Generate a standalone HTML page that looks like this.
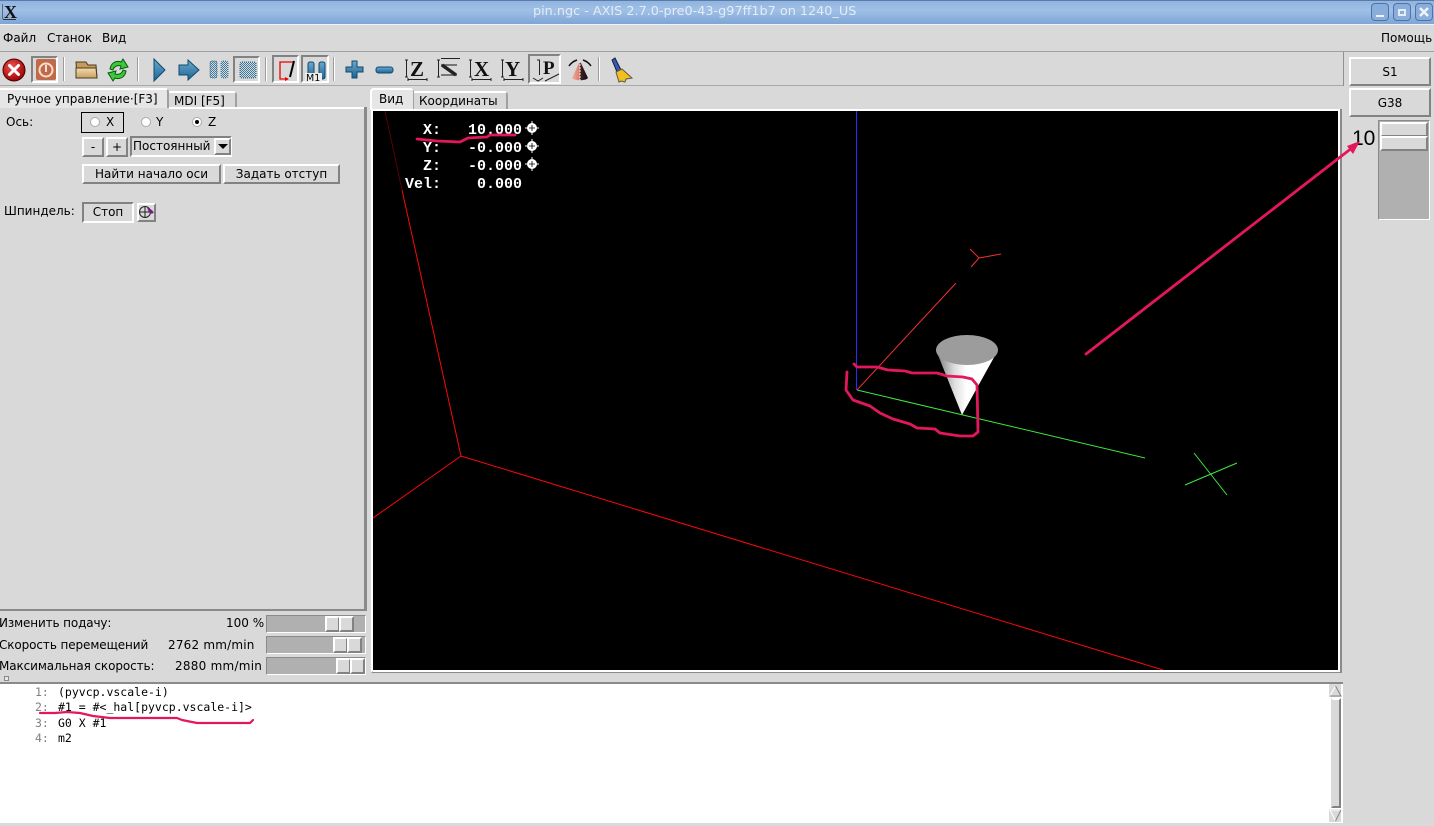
<!DOCTYPE html>
<html><head><meta charset="utf-8"><style>
html,body{margin:0;padding:0;width:1434px;height:826px;overflow:hidden;background:#d9d9d9}
body{position:relative;font-family:"DejaVu Sans","Liberation Sans",sans-serif;font-size:12px;color:#000}
.a{position:absolute;box-sizing:border-box}
.t{position:absolute;white-space:nowrap;line-height:14px}
.b{position:absolute;box-sizing:border-box;background:#d9d9d9;border:2px solid;border-color:#fff #828282 #828282 #fff;text-align:center;white-space:nowrap}
.s{position:absolute;box-sizing:border-box;background:#d9d9d9;border:2px solid;border-color:#828282 #fff #fff #828282}
.m{font-family:"DejaVu Sans Mono","Liberation Mono",monospace;font-size:11.5px;line-height:15.3px;position:absolute;white-space:pre}
.d{font-family:"Liberation Mono",monospace;font-weight:bold;font-size:15px;color:#fff;position:absolute;white-space:pre;line-height:18px}
svg{position:absolute;left:0;top:0}
</style></head><body>
<!-- title bar -->
<div class="a" style="left:0;top:0;width:1434px;height:25px;background:linear-gradient(#8fb4e0,#a0c0e6 40%,#7ea5d6);border-top:1px solid #5b7aa5;border-bottom:1px solid #f0f4fa"></div>
<div class="t" style="left:533px;top:5px;font-size:12.8px;color:#e4ecf6">pin.ngc - AXIS 2.7.0-pre0-43-g97ff1b7 on 1240_US</div>
<div class="t" style="left:4px;top:3px;font-family:'Liberation Serif',serif;font-weight:bold;font-size:18px;line-height:18px;color:#111">X</div>
<div class="a" style="left:2px;top:4px;width:1px;height:15px;background:#666"></div>
<div class="a" style="left:3px;top:19px;width:13px;height:1px;background:#333"></div>
<div class="a" style="left:1371px;top:3px;width:18px;height:18px;border:1px solid #4f73a8;border-radius:4px;background:#8aaedc"></div>
<div class="a" style="left:1393px;top:3px;width:18px;height:18px;border:1px solid #4f73a8;border-radius:4px;background:#8aaedc"></div>
<div class="a" style="left:1415px;top:3px;width:18px;height:18px;border:1px solid #4f73a8;border-radius:4px;background:#8aaedc"></div>
<div class="a" style="left:1376px;top:15px;width:8px;height:2px;background:#eef3fa"></div>
<div class="a" style="left:1398px;top:9px;width:8px;height:7px;border:2px solid #e4ecf6"></div>
<svg width="1434" height="30"><path d="M1420 8l8 8M1428 8l-8 8" stroke="#eef3fa" stroke-width="2.600"/></svg>
<!-- menu -->
<div class="t" style="left:3px;top:31px">Файл</div>
<div class="t" style="left:47px;top:31px">Станок</div>
<div class="t" style="left:102px;top:31px">Вид</div>
<div class="t" style="left:1381px;top:31px">Помощь</div>
<div class="a" style="left:0;top:51px;width:1434px;height:1px;background:#a0a0a0"></div>
<div class="a" style="left:0;top:85px;width:1344px;height:1px;background:#a8a8a8"></div>
<div class="a" style="left:1343px;top:52px;width:1px;height:34px;background:#909090"></div>
<!-- toolbar raised/sunken -->
<div class="s" style="left:31px;top:56px;width:27px;height:27px"></div>
<div class="s" style="left:233px;top:56px;width:27px;height:27px"></div>
<div class="s" style="left:272px;top:55px;width:27px;height:28px"></div>
<div class="s" style="left:301px;top:55px;width:28px;height:28px"></div>
<div class="s" style="left:528px;top:54px;width:33px;height:30px"></div>
<div class="a" style="left:63px;top:57px;width:2px;height:24px;background:linear-gradient(90deg,#9c9c9c 50%,#fff 50%)"></div>
<div class="a" style="left:137px;top:57px;width:2px;height:24px;background:linear-gradient(90deg,#9c9c9c 50%,#fff 50%)"></div>
<div class="a" style="left:265px;top:57px;width:2px;height:24px;background:linear-gradient(90deg,#9c9c9c 50%,#fff 50%)"></div>
<div class="a" style="left:333px;top:57px;width:2px;height:24px;background:linear-gradient(90deg,#9c9c9c 50%,#fff 50%)"></div>
<div class="a" style="left:598px;top:57px;width:2px;height:24px;background:linear-gradient(90deg,#9c9c9c 50%,#fff 50%)"></div>
<!-- left tabs -->
<div class="a" style="left:0;top:88px;width:169px;height:20px;background:#e6e6e6;border-top:2px solid #fff;border-right:2px solid #a0a0a0;border-top-right-radius:4px"></div>
<div class="t" style="left:7px;top:92px">Ручное управление·[F3]</div>
<div class="a" style="left:169px;top:91px;width:68px;height:17px;border-top:2px solid #fff;border-right:2px solid #a0a0a0;border-top-right-radius:4px"></div>
<div class="t" style="left:174px;top:94px">MDI [F5]</div>
<div class="a" style="left:169px;top:107px;width:197px;height:2px;background:#fff"></div>
<div class="a" style="left:364px;top:107px;width:3px;height:504px;background:#8a8a8a"></div>
<div class="a" style="left:0;top:609px;width:367px;height:2px;background:#8a8a8a"></div>
<!-- axis -->
<div class="t" style="left:6px;top:115px">Ось:</div>
<div class="a" style="left:81px;top:112px;width:43px;height:21px;border:1px solid #000"></div>
<svg width="260" height="135" style="z-index:1">
<circle cx="95" cy="122" r="4.500" fill="#fff" stroke="#aaa"/>
<circle cx="146" cy="122" r="4.500" fill="#fff" stroke="#aaa"/>
<circle cx="197" cy="122" r="4.500" fill="#fff" stroke="#aaa"/>
<circle cx="197" cy="122" r="2" fill="#000"/>
</svg>
<div class="t" style="left:106px;top:115px">X</div>
<div class="t" style="left:156px;top:115px">Y</div>
<div class="t" style="left:208px;top:115px">Z</div>
<div class="b" style="left:82px;top:137px;width:22px;height:20px;line-height:16px">-</div>
<div class="b" style="left:106px;top:137px;width:22px;height:20px;line-height:16px">+</div>
<div class="s" style="left:130px;top:136px;width:102px;height:21px"></div>
<div class="t" style="left:133px;top:139px">Постоянный</div>
<div class="b" style="left:214px;top:138px;width:17px;height:17px"></div>
<svg width="240" height="160" style="z-index:1"><path d="M218 144h10l-5 5z" fill="#000"/></svg>
<div class="b" style="left:82px;top:164px;width:139px;height:20px;line-height:16px">Найти начало оси</div>
<div class="b" style="left:223px;top:164px;width:117px;height:20px;line-height:16px">Задать отступ</div>
<div class="t" style="left:4px;top:204px">Шпиндель:</div>
<div class="s" style="left:82px;top:202px;width:52px;height:21px;text-align:center;line-height:17px">Стоп</div>
<div class="b" style="left:137px;top:203px;width:19px;height:19px"></div>
<svg width="160" height="225" style="z-index:1">
<circle cx="145" cy="212" r="5.500" fill="none" stroke="#222"/><path d="M145 206v12M139 212h12" stroke="#222"/>
<path d="M147 208l5 2 2 3-4 1z" fill="#7a1a8a"/>
</svg>
<!-- sliders -->
<div class="t" style="left:-1px;top:616px;letter-spacing:-.13px">Изменить подачу:</div>
<div class="t" style="left:226px;top:616px">100 %</div>
<div class="t" style="left:-1px;top:638px;letter-spacing:-.1px">Скорость перемещений</div>
<div class="t" style="left:168px;top:638px;letter-spacing:.2px">2762 mm/min</div>
<div class="t" style="left:-1px;top:659px;letter-spacing:-.1px">Максимальная скорость:</div>
<div class="t" style="left:175px;top:659px;letter-spacing:.25px">2880 mm/min</div>
<div class="a" style="left:266px;top:615px;width:100px;height:18px;background:#b0b0b0;border:1px solid;border-color:#8a8a8a #fff #fff #8a8a8a"></div>
<div class="a" style="left:266px;top:636px;width:100px;height:18px;background:#b0b0b0;border:1px solid;border-color:#8a8a8a #fff #fff #8a8a8a"></div>
<div class="a" style="left:266px;top:657px;width:100px;height:18px;background:#b0b0b0;border:1px solid;border-color:#8a8a8a #fff #fff #8a8a8a"></div>
<div class="b" style="left:325px;top:616px;width:15px;height:16px"></div><div class="b" style="left:339px;top:616px;width:15px;height:16px"></div>
<div class="b" style="left:333px;top:637px;width:15px;height:16px"></div><div class="b" style="left:347px;top:637px;width:15px;height:16px"></div>
<div class="b" style="left:336px;top:658px;width:15px;height:16px"></div><div class="b" style="left:350px;top:658px;width:15px;height:16px"></div>
<div class="a" style="left:4px;top:676px;width:5px;height:5px;background:#e8e8e8;border:1px solid #888"></div>
<!-- view tabs -->
<div class="a" style="left:370px;top:88px;width:44px;height:22px;background:#e6e6e6;border-top:2px solid #fff;border-left:2px solid #fff;border-right:1px solid #a0a0a0;border-top-left-radius:4px;border-top-right-radius:4px"></div>
<div class="t" style="left:379px;top:92px">Вид</div>
<div class="a" style="left:414px;top:91px;width:94px;height:18px;border-top:2px solid #fff;border-right:2px solid #a0a0a0;border-top-right-radius:4px"></div>
<div class="t" style="left:419px;top:94px">Координаты</div>
<!-- canvas -->
<div class="a" style="left:371px;top:109px;width:971px;height:564px;background:#000;border:2px solid;border-color:#fff #8a8a8a #8a8a8a #fff"></div>
<div class="a" style="left:373px;top:670px;width:967px;height:2px;background:#fff"></div>
<div class="a" style="left:1340px;top:109px;width:2px;height:564px;background:#8a8a8a"></div>
<div class="a" style="left:1338px;top:111px;width:2px;height:560px;background:#fff"></div>
<div class="a" style="left:856px;top:111px;width:1px;height:279px;background:#2a2aff;z-index:2"></div>
<svg width="1434" height="826" style="z-index:2">
<defs>
<linearGradient id="c" x1="0" x2="1" y1="0" y2="0"><stop offset="0" stop-color="#777"/><stop offset=".3" stop-color="#ddd"/><stop offset=".5" stop-color="#fff"/><stop offset="1" stop-color="#fff"/></linearGradient>
<clipPath id="cv"><rect x="373" y="111" width="965" height="559"/></clipPath>
<radialGradient id="rd" cx=".4" cy=".35" r=".7"><stop offset="0" stop-color="#f05050"/><stop offset="1" stop-color="#900"/></radialGradient>
<linearGradient id="bl" x1="0" x2="0" y1="0" y2="1"><stop offset="0" stop-color="#6fa8cc"/><stop offset="1" stop-color="#1a6595"/></linearGradient>
<linearGradient id="rc" x1="0" x2="1" y1="0" y2="0"><stop offset="0" stop-color="#f0b0a0"/><stop offset=".5" stop-color="#d87868"/><stop offset=".52" stop-color="#402020"/><stop offset="1" stop-color="#111"/></linearGradient>
<pattern id="dt" width="2" height="2" patternUnits="userSpaceOnUse"><rect width="2" height="2" fill="#d9d9d9"/><rect width="1" height="1" fill="#3f7a9c"/><rect x="1" y="1" width="1" height="1" fill="#3f7a9c"/></pattern>
<linearGradient id="fo" x1="0" x2="0" y1="0" y2="1"><stop offset="0" stop-color="#f3dcaa"/><stop offset="1" stop-color="#c8a066"/></linearGradient>
</defs>
<!-- toolbar icons -->
<circle cx="14" cy="70" r="11" fill="url(#rd)" stroke="#400"/>
<path d="M9.500 65.500l9 9M18.500 65.500l-9 9" stroke="#fff" stroke-width="3" stroke-linecap="round"/>
<rect x="36" y="59" width="20" height="21" rx="2" fill="#c26a48"/>
<circle cx="46" cy="70" r="6.500" fill="none" stroke="#f6dfd0" stroke-width="2"/><path d="M46 65v7" stroke="#f6dfd0" stroke-width="2"/>
<path d="M76 62h10l2 3h8l1 13H77z" fill="#c49a5e" stroke="#4a3c20"/>
<path d="M76 78l0-10h20l1 10z" fill="url(#fo)" stroke="#4a3c20"/>
<path d="M110 69c1-6 6-9 11-7l2-3 5 8-8 2 1-3c-3-1-7 0-8 4z" fill="#3cc83c" stroke="#0a5a0a"/>
<path d="M126 71c-1 6-6 9-11 7l-2 3-5-8 8-2-1 3c3 1 7 0 8-4z" fill="#3cc83c" stroke="#0a5a0a"/>
<path d="M154 59l11 11-11 11z" fill="url(#bl)" stroke="#0e4a70"/>
<path d="M179 65h9v-5l11 10-11 10v-5h-9z" fill="url(#bl)" stroke="#0e4a70"/>
<rect x="210" y="61" width="7" height="17" rx="2" fill="url(#dt)" stroke="#3f7a9c" stroke-dasharray="1 1"/><rect x="221" y="61" width="7" height="17" rx="2" fill="url(#dt)" stroke="#3f7a9c" stroke-dasharray="1 1"/>
<rect x="240" y="62" width="16" height="16" rx="2" fill="url(#dt)" stroke="#1f5f85" stroke-dasharray="1 1"/>
<path d="M293 62h-13v17h8" fill="none" stroke="#e00" stroke-width="1.300"/><path d="M285 77l4 2-4 2z" fill="#e00"/>
<path d="M290 77l4-16" stroke="#000" stroke-width="2"/>
<rect x="308" y="62" width="6" height="17" rx="2" fill="url(#bl)" stroke="#0e4a70"/><rect x="319" y="62" width="6" height="17" rx="2" fill="url(#bl)" stroke="#0e4a70"/>
<rect x="305" y="73" width="17" height="9" fill="#eee"/>
<text x="306" y="81" font-family="DejaVu Sans" font-size="9.500">M1</text>
<path d="M346 67h6v-6h5v6h6v5h-6v6h-5v-6h-6z" fill="url(#bl)" stroke="#0e4a70"/>
<rect x="376" y="67" width="17" height="6" rx="2.500" fill="url(#bl)" stroke="#0e4a70"/>
<g font-family="Liberation Serif,serif" font-weight="bold" font-size="21" fill="#111">
<text x="410" y="76">Z</text><text x="474" y="76">X</text><text x="505" y="76">Y</text><text x="543" y="74" font-size="19">P</text>
</g>
<path d="M441 65h16M441 75h16" stroke="#555" stroke-width="1.500"/><path d="M442 65l14 10" stroke="#222" stroke-width="3.500"/>
<g stroke="#222" fill="none">
<path d="M405 60h3M406.500 60v17M405 77h3M408 79.500h19M408 78v3M427 78v3"/>
<path d="M437 60h3M438.500 60v17M437 77h3M441 58.500h19"/>
<path d="M469 60h3M470.500 60v17M469 77h3M472 79.500h19M472 78v3M491 78v3"/>
<path d="M501 60h3M502.500 60v17M501 77h3M504 79.500h19M504 78v3M523 78v3"/>
<path d="M539.500 60v15M537 60h3M533 78l5 3 5-3M545 81l14-7"/>
</g>
<path d="M580 61l-8 17c2 3 14 3 16 0z" fill="url(#rc)"/><path d="M580 61v21" stroke="#eee" stroke-dasharray="2 1"/>
<path d="M569 66c2-3 5-5 8-6M591 66c-2-3-5-5-8-6" fill="none" stroke="#111" stroke-width="1.500"/>
<path d="M612 60l3-2 6 12-4 2z" fill="#3a58b8" stroke="#123"/>
<path d="M616 72l6-3 10 9-6 1-1 3-4-1-2 1z" fill="#f0c020" stroke="#654"/>
<!-- 3D view -->
<g clip-path="url(#cv)" fill="none" stroke-width="1">
<path d="M385 111L402 190" stroke="#5a0000"/>
<path d="M402 190L461 456M373 518L461 456M461 456L1163 670" stroke="#f80808"/>
<path d="M857 390L1145 458" stroke="#3fe83f"/>
<path d="M857 390L956 283" stroke="#f03030"/>
<path d="M1194 453L1227 495M1185 485L1237 463" stroke="#3fe83f"/>
<path d="M970 249L979 258M979 258L971 267M979 258L1001 254" stroke="#f03030"/>
</g>
<path d="M936 350L962 415L997 352z" fill="url(#c)"/>
<ellipse cx="967" cy="350" rx="31" ry="15" fill="#9c9c9c"/>
<!-- annotations -->
<g fill="none" stroke="#e3175c" stroke-width="2.800" stroke-linecap="round" stroke-linejoin="round">
<path d="M854 364L857 367L877 367L888 370L905 371L912 373L937 373L947 376L963 377L972 379L977 385L978 432L973 436L960 436L940 433L935 429L917 428L910 424L893 419L880 413L870 406L853 400L846 390L847 372"/>
<path d="M417 139L437 141L460 142L468 138L487 137L490 135L515 135"/>
<path d="M1086 354L1357 144"/>
</g>
<path d="M1360 141l-13 5 6 8z" fill="#e3175c"/>
</svg>
<!-- DRO -->
<div class="d" style="left:405px;top:122px;z-index:1">  X:   10.000
  Y:   -0.000
  Z:   -0.000
Vel:    0.000</div>
<svg width="1434" height="826" style="z-index:3">
<g fill="#fff"><circle cx="532" cy="128" r="5"/><circle cx="532" cy="146" r="5"/><circle cx="532" cy="164" r="5"/></g>
<path d="M525 128h14M532 121v14M525 146h14M532 139v14M525 164h14M532 157v14" stroke="#fff"/>
<path d="M532 125v6M529 128h6M532 143v6M529 146h6M532 161v6M529 164h6" stroke="#000" stroke-width=".8"/>
</svg>
<!-- right panel -->
<div class="b" style="left:1349px;top:57px;width:82px;height:29px;line-height:26px">S1</div>
<div class="b" style="left:1349px;top:88px;width:82px;height:29px;line-height:26px">G38</div>
<div class="t" style="left:1352px;top:128px;font-family:'Liberation Sans',sans-serif;font-size:21px;line-height:22px;z-index:1">10</div>
<div class="a" style="left:1378px;top:120px;width:52px;height:100px;background:#b0b0b0;border:1px solid;border-color:#8a8a8a #fff #fff #8a8a8a"></div>
<div class="b" style="left:1380px;top:122px;width:48px;height:15px"></div>
<div class="b" style="left:1380px;top:136px;width:48px;height:15px"></div>
<!-- text area -->
<div class="a" style="left:0;top:682px;width:1343px;height:2px;background:#8a8a8a"></div>
<div class="a" style="left:0;top:684px;width:1343px;height:139px;background:#fff"></div>
<div class="m" style="left:35px;top:685px;color:#808080">1:
2:
3:
4:</div>
<div class="m" style="left:58px;top:685px">(pyvcp.vscale-i)
#1 = #&lt;_hal[pyvcp.vscale-i]&gt;
G0 X #1
m2</div>
<svg width="1434" height="826" style="z-index:2">
<path d="M40 713L55 713L67 712L80 713L93 716L110 718L177 718L182 720L197 723L250 723L253 720" fill="none" stroke="#e3175c" stroke-width="2.200" stroke-linecap="round" stroke-linejoin="round"/>
</svg>
<!-- scrollbar -->
<div class="a" style="left:1329px;top:684px;width:12px;height:13px;background:#d9d9d9"></div>
<div class="a" style="left:1329px;top:809px;width:12px;height:13px;background:#d9d9d9"></div>
<div class="a" style="left:1331px;top:698px;width:10px;height:110px;background:#d9d9d9;border:2px solid;border-color:#fff #828282 #828282 #d9d9d9"></div>
<svg width="1434" height="826" style="z-index:2">
<path d="M1335.500 686L1330 696" stroke="#fff" fill="none"/><path d="M1335.500 686L1341 696H1330" stroke="#828282" fill="none"/>
<path d="M1335.500 821L1330 810H1341" stroke="#fff" fill="none"/><path d="M1335.500 821L1341 810" stroke="#828282" fill="none"/>
</svg>
</body></html>
